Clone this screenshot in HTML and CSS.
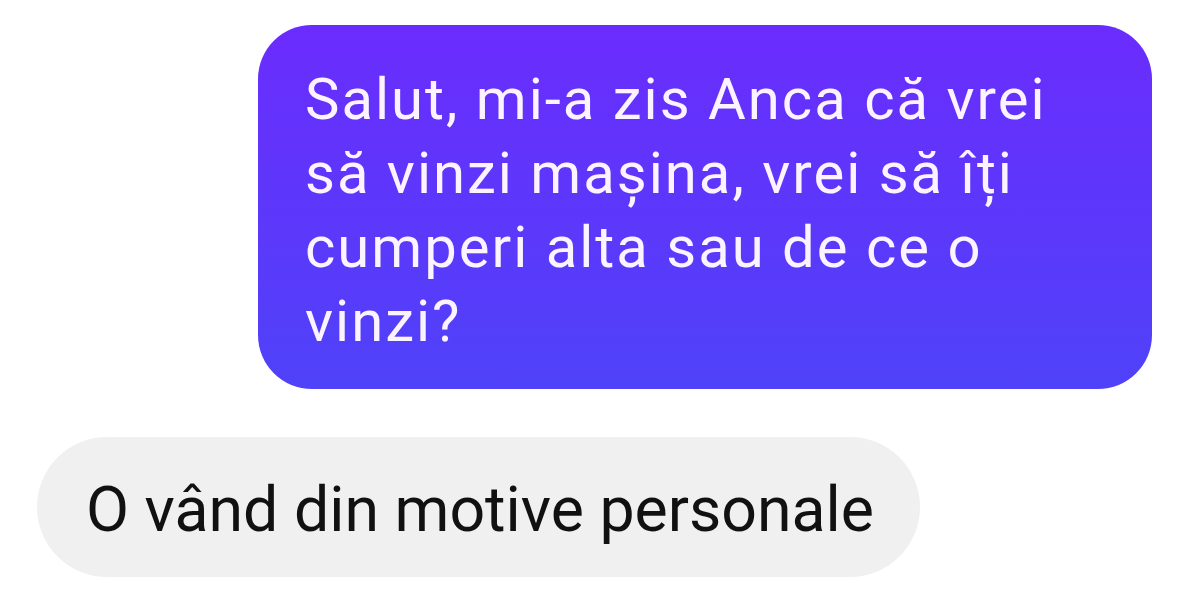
FILE: index.html
```html
<!DOCTYPE html>
<html lang="ro">
<head>
<meta charset="utf-8">
<title>Chat</title>
<link rel="stylesheet" href="styles.css">
</head>
<body>
<main class="chat">
  <div class="bubble bubble-out">
    <p class="msg-text">Salut, mi-a zis Anca că vrei<br>să vinzi mașina, vrei să îți<br>cumperi alta sau de ce o<br>vinzi?</p>
  </div>
  <div class="bubble bubble-in">
    <p class="msg-text">O vând din motive personale</p>
  </div>
</main>
</body>
</html>
```
FILE: styles.css
```css
html, body {
  margin: 0;
  padding: 0;
  background: #ffffff;
}
body {
  width: 1200px;
  height: 616px;
  overflow: hidden;
  font-family: Roboto, "Noto Sans", "Liberation Sans", sans-serif;
}
.chat {
  display: flex;
  flex-direction: column;
  padding: 25px 48px 0 37px;
}
.bubble {
  box-sizing: border-box;
}
.msg-text {
  margin: 0;
  white-space: nowrap;
}
.bubble-out {
  align-self: flex-end;
  width: 894px;
  height: 364px;
  padding: 37px 30px 0 47px;
  border-radius: 54px;
  background: linear-gradient(180deg, #6a2cfd 0%, #5d37fb 50%, #4f42f9 100%);
  color: #fbf3ff;
  font-size: 58px;
  letter-spacing: 2px;
  line-height: 74px;
}
.bubble-in {
  align-self: flex-start;
  margin-top: 48px;
  height: 140px;
  padding: 5px 46px 0 49px;
  display: flex;
  align-items: center;
  border-radius: 70px;
  background: #f0f0f0;
  color: #111111;
  font-size: 62.6px;
}
```
